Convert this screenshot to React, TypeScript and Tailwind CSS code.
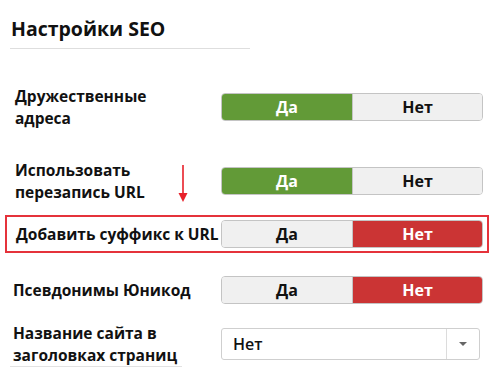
import React from "react";

const font = { fontFamily: '"Open Sans", "Noto Sans", sans-serif' };

function Toggle({ yes }: { yes: boolean }) {
  return (
    <div className="flex w-[262px] h-[28px] rounded-[4px] overflow-hidden border border-[#c4c4c4] text-[16px] font-bold">
      <div
        className={
          "w-[131px] flex items-center justify-center border-r border-[#c4c4c4] " +
          (yes ? "bg-[#629a37] text-white" : "bg-[#f0f0f0] text-[#111]")
        }
      >
        Да
      </div>
      <div
        className={
          "flex-1 flex items-center justify-center " +
          (!yes ? "bg-[#cb3434] text-white" : "bg-[#f0f0f0] text-[#111]")
        }
      >
        Нет
      </div>
    </div>
  );
}

export default function App() {
  return (
    <div className="relative w-[496px] h-[375px] bg-white overflow-hidden text-[#111]" style={font}>
      <div className="ml-[10px] w-[240px] h-[49px] border-b border-[#dedede] pt-[16px] pl-[1px] text-[19.5px] leading-[26px] font-bold">
        Настройки SEO
      </div>

      <div className="mt-[36px] flex items-center h-[44px] pl-[15px]">
        <div className="w-[206px] text-[15.5px] leading-[22px] font-bold">
          Дружественные
          <br />
          адреса
        </div>
        <Toggle yes={true} />
      </div>

      <div className="mt-[30px] flex items-center h-[44px] pl-[15px]">
        <div className="w-[206px] text-[15.5px] leading-[22px] font-bold">
          Использовать
          <br />
          перезапись URL
        </div>
        <Toggle yes={true} />
      </div>

      <div className="mt-[12px] ml-[5px] w-[484px] h-[38px] border-2 border-[#e5323b] flex items-center pl-[9px]">
        <div className="w-[205px] text-[15.5px] leading-[22px] font-bold whitespace-nowrap">
          Добавить суффикс к URL
        </div>
        <Toggle yes={false} />
      </div>

      <div className="mt-[23px] flex items-center h-[28px] pl-[13px]">
        <div className="w-[208px] text-[15.5px] leading-[22px] font-bold">Псевдонимы Юникод</div>
        <Toggle yes={false} />
      </div>

      <div className="mt-[18px] flex items-center h-[44px] pl-[13px]">
        <div className="w-[208px] text-[15.5px] leading-[22px] font-bold relative">
          Название сайта в
          <br />
          заголовках страниц
        </div>
        <div className="w-[259px] h-[32px] border border-[#cfcfcf] rounded-[3px] flex items-center bg-white">
          <div className="flex-1 pl-[11px] text-[16px] font-semibold">Нет</div>
          <div className="w-[33px] h-full border-l border-[#dcdcdc] flex items-center justify-center">
            <div className="w-0 h-0 border-l-[4px] border-r-[4px] border-t-[4px] border-l-transparent border-r-transparent border-t-[#666]" />
          </div>
        </div>
      </div>
      <div className="ml-[10px] w-[172px] border-b border-[#e2e2e2]" />

      <svg className="absolute left-[177px] top-[164px]" width="12" height="40" viewBox="0 0 12 40">
        <line x1="6" y1="1" x2="6" y2="32" stroke="#e8202a" strokeWidth="1.6" />
        <path d="M1.5 29 L6 38 L10.5 29 Z" fill="#e8202a" />
      </svg>
    </div>
  );
}
